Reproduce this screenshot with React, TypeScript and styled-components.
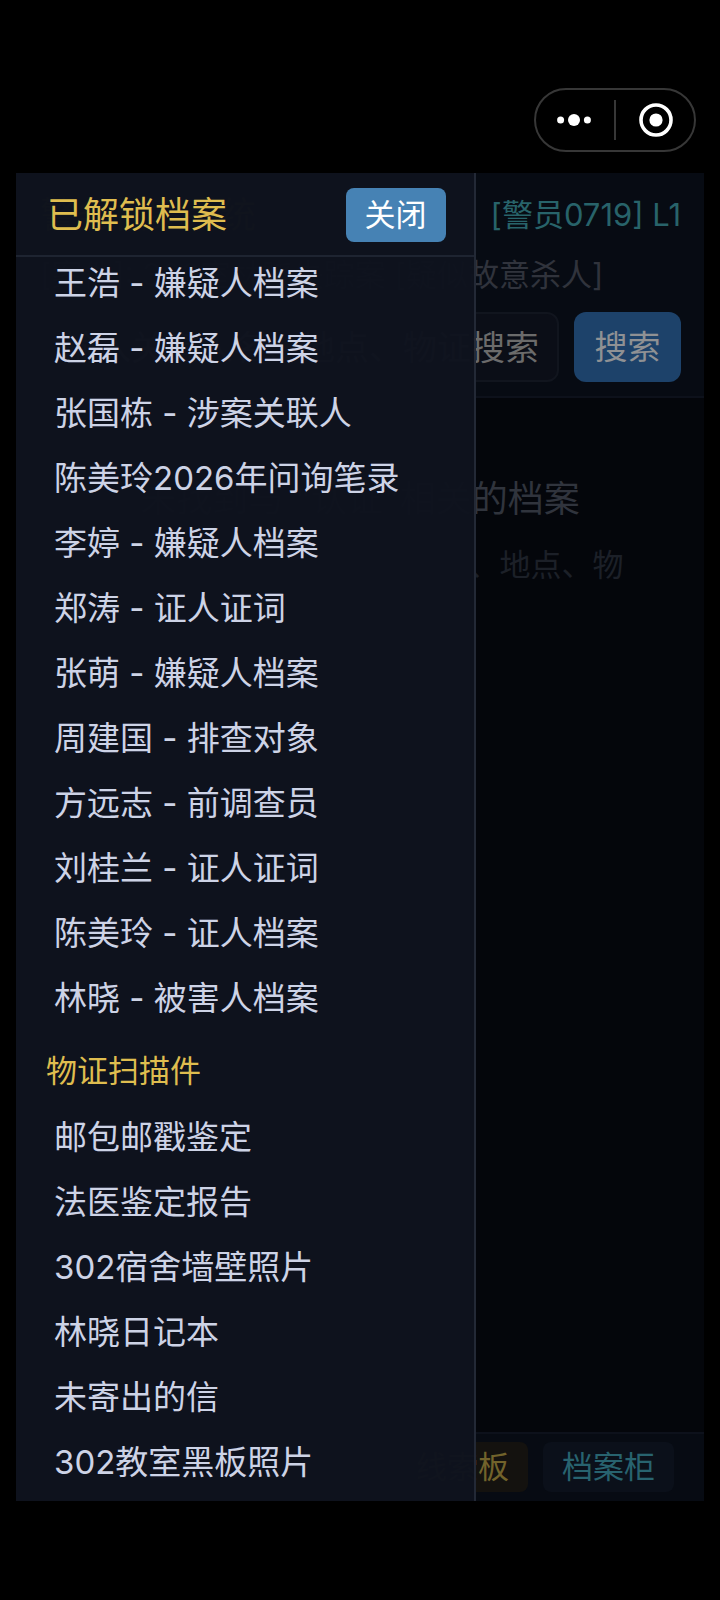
import React, { useLayoutEffect, useRef } from "react";
import styled, { createGlobalStyle } from "styled-components";

const Global = createGlobalStyle`
  *, *::before, *::after { box-sizing: border-box; }
  html, body { margin: 0; background: #000; }
  body, button, input {
    font-family: Inter, "Noto Sans CJK SC", sans-serif;
    font-weight: 400;
  }
  h1, h2, h3, p, ul { margin: 0; padding: 0; font-weight: 400; }
`;

const Page = styled.div`
  min-height: 100vh;
  display: flex;
  flex-direction: column;
  padding: 0 16px 99px;
  background: #000;
`;

const SystemBar = styled.header`
  height: 173px;
  flex: none;
  display: flex;
  justify-content: flex-end;
  align-items: flex-end;
  padding: 0 8px 21px 0;
`;

const Capsule = styled.div`
  display: flex;
  align-items: center;
  width: 162px;
  height: 64px;
  border: 2px solid #373737;
  border-radius: 32px;
`;

const CapsuleButton = styled.button`
  flex: 1;
  height: 40px;
  display: flex;
  align-items: center;
  justify-content: center;
  padding: 0 2px 0 0;
  border: 0;
  background: none;
  & + & {
    padding: 0 0 0 2px;
    border-left: 2px solid #373737;
  }
`;

const Screen = styled.main`
  position: relative;
  flex: 1;
  display: flex;
  flex-direction: column;
  overflow: hidden;
  background: #04060b;
`;

const TopPanel = styled.section`
  padding: 15px 23px 14px 24px;
  background: #070b13;
  border-bottom: 2px solid #0d111b;
`;

const StatusRow = styled.div`
  display: flex;
  justify-content: space-between;
  align-items: center;
  height: 54px;
  line-height: 54px;
`;

const SystemName = styled.h1`
  font-size: 36px;
  color: #6a5d2a;
`;

const Officer = styled.span`
  font-size: 31px;
  color: #28636a;
`;

const CaseLine = styled.p`
  font-size: 31px;
  line-height: 40px;
  margin: 13px 0 17px;
  color: #30333c;
  white-space: nowrap;
`;

const SearchRow = styled.form`
  display: flex;
  gap: 15px;
`;

const SearchInput = styled.input`
  flex: 1;
  min-width: 0;
  height: 70px;
  padding: 0 10px 0 21px;
  font-size: 34px;
  color: #6b6b6b;
  background: #0b0e17;
  border: 2px solid #11151e;
  border-radius: 12px;
  &::placeholder { color: #6b6b6b; opacity: 1; }
`;

const SearchButton = styled.button`
  width: 107px;
  height: 70px;
  padding: 0;
  border: 0;
  border-radius: 12px;
  background: #1d426a;
  color: #8f9194;
  font-size: 33px;
  line-height: 70px;
`;

const EmptyState = styled.section`
  flex: 1;
  padding: 74px 72px 0;
  text-align: center;
`;

const EmptyTitle = styled.h2`
  font-size: 36px;
  line-height: 54px;
  color: #30343d;
  white-space: nowrap;
`;

const EmptyHint = styled.p`
  margin-top: 11px;
  font-size: 31px;
  line-height: 56px;
  color: #1c2028;
`;

const BottomBar = styled.nav`
  display: flex;
  justify-content: flex-end;
  gap: 15px;
  padding: 8px 30px 9px;
  background: #070b13;
  border-top: 2px solid #0d111b;
`;

const BarButton = styled.button<{ $tone: "gold" | "teal" }>`
  height: 50px;
  padding: 0 19px;
  border: 0;
  border-radius: 8px;
  font-size: 31px;
  line-height: 50px;
  background: ${(p) => (p.$tone === "gold" ? "#14120f" : "#0b101a")};
  color: ${(p) => (p.$tone === "gold" ? "#72632b" : "#28636f")};
`;

const Drawer = styled.aside`
  position: absolute;
  inset: 0 auto 0 0;
  width: 66.8%;
  display: flex;
  flex-direction: column;
  background: rgba(14, 18, 30, 0.98);
  border-right: 2px solid #232936;
`;

const DrawerHeader = styled.div`
  flex: none;
  display: flex;
  justify-content: space-between;
  align-items: center;
  height: 84px;
  padding: 2px 28px 0 31px;
  border-bottom: 2px solid #1e2431;
`;

const DrawerTitle = styled.h2`
  font-size: 36px;
  line-height: 54px;
  color: #dfbd4f;
`;

const CloseButton = styled.button`
  width: 100px;
  height: 54px;
  padding: 0;
  border: 0;
  border-radius: 8px;
  background: #4682b4;
  color: #fff;
  font-size: 31px;
  line-height: 54px;
`;

const FileList = styled.div`
  flex: 1;
  min-height: 0;
  overflow-y: auto;
  scrollbar-width: none;
  padding: 8px 16px 6px;
`;

const GroupTitle = styled.h3`
  padding: 16px 14px 10px;
  font-size: 31px;
  line-height: 48px;
  color: #dfbd4f;
`;

const Files = styled.ul`
  list-style: none;
`;

const FileLink = styled.a`
  display: block;
  padding: 0 22px;
  font-size: 33px;
  line-height: 65px;
  color: #cdd3e6;
  text-decoration: none;
  white-space: nowrap;
`;

const groups = [
  {
    title: "人物档案",
    files: [
      "王浩 - 嫌疑人档案",
      "赵磊 - 嫌疑人档案",
      "张国栋 - 涉案关联人",
      "陈美玲2026年问询笔录",
      "李婷 - 嫌疑人档案",
      "郑涛 - 证人证词",
      "张萌 - 嫌疑人档案",
      "周建国 - 排查对象",
      "方远志 - 前调查员",
      "刘桂兰 - 证人证词",
      "陈美玲 - 证人档案",
      "林晓 - 被害人档案",
    ],
  },
  {
    title: "物证扫描件",
    files: [
      "邮包邮戳鉴定",
      "法医鉴定报告",
      "302宿舍墙壁照片",
      "林晓日记本",
      "未寄出的信",
      "302教室黑板照片",
    ],
  },
];

export default function App() {
  const list = useRef<HTMLDivElement>(null);

  useLayoutEffect(() => {
    if (list.current) list.current.scrollTop = list.current.scrollHeight;
  }, []);

  return (
    <Page>
      <Global />
      <SystemBar>
        <Capsule>
          <CapsuleButton type="button" aria-label="更多">
            <svg width="36" height="14" viewBox="0 0 36 14" fill="#fff">
              <circle cx="4.600" cy="7" r="3.500" />
              <circle cx="18" cy="7" r="6" />
              <circle cx="31.400" cy="7" r="3.500" />
            </svg>
          </CapsuleButton>
          <CapsuleButton type="button" aria-label="退出">
            <svg width="36" height="36" viewBox="0 0 36 36">
              <circle cx="18" cy="18" r="15" fill="none" stroke="#fff" strokeWidth="3.600" />
              <circle cx="18" cy="18" r="6.600" fill="#fff" />
            </svg>
          </CapsuleButton>
        </Capsule>
      </SystemBar>
      <Screen>
        <TopPanel>
          <StatusRow>
            <SystemName>警务档案系统</SystemName>
            <Officer>[警员0719] L1</Officer>
          </StatusRow>
          <CaseLine>[案件]: 302室林晓失踪案 [疑似故意杀人]</CaseLine>
          <SearchRow onSubmit={(e) => e.preventDefault()}>
            <SearchInput aria-label="搜索档案" placeholder="输入关键人名、地点、物证搜索" />
            <SearchButton type="submit">搜索</SearchButton>
          </SearchRow>
        </TopPanel>
        <EmptyState>
          <EmptyTitle>未找到与 "认证"相关的档案</EmptyTitle>
          <EmptyHint>请尝试其他关键词，如人名、地点、物证名</EmptyHint>
        </EmptyState>
        <BottomBar>
          <BarButton type="button" $tone="gold">线索板</BarButton>
          <BarButton type="button" $tone="teal">档案柜</BarButton>
        </BottomBar>
        <Drawer aria-label="已解锁档案">
          <DrawerHeader>
            <DrawerTitle>已解锁档案</DrawerTitle>
            <CloseButton type="button">关闭</CloseButton>
          </DrawerHeader>
          <FileList ref={list}>
            {groups.map((group) => (
              <section key={group.title}>
                <GroupTitle>{group.title}</GroupTitle>
                <Files>
                  {group.files.map((file) => (
                    <li key={file}>
                      <FileLink href="#">{file}</FileLink>
                    </li>
                  ))}
                </Files>
              </section>
            ))}
          </FileList>
        </Drawer>
      </Screen>
    </Page>
  );
}
